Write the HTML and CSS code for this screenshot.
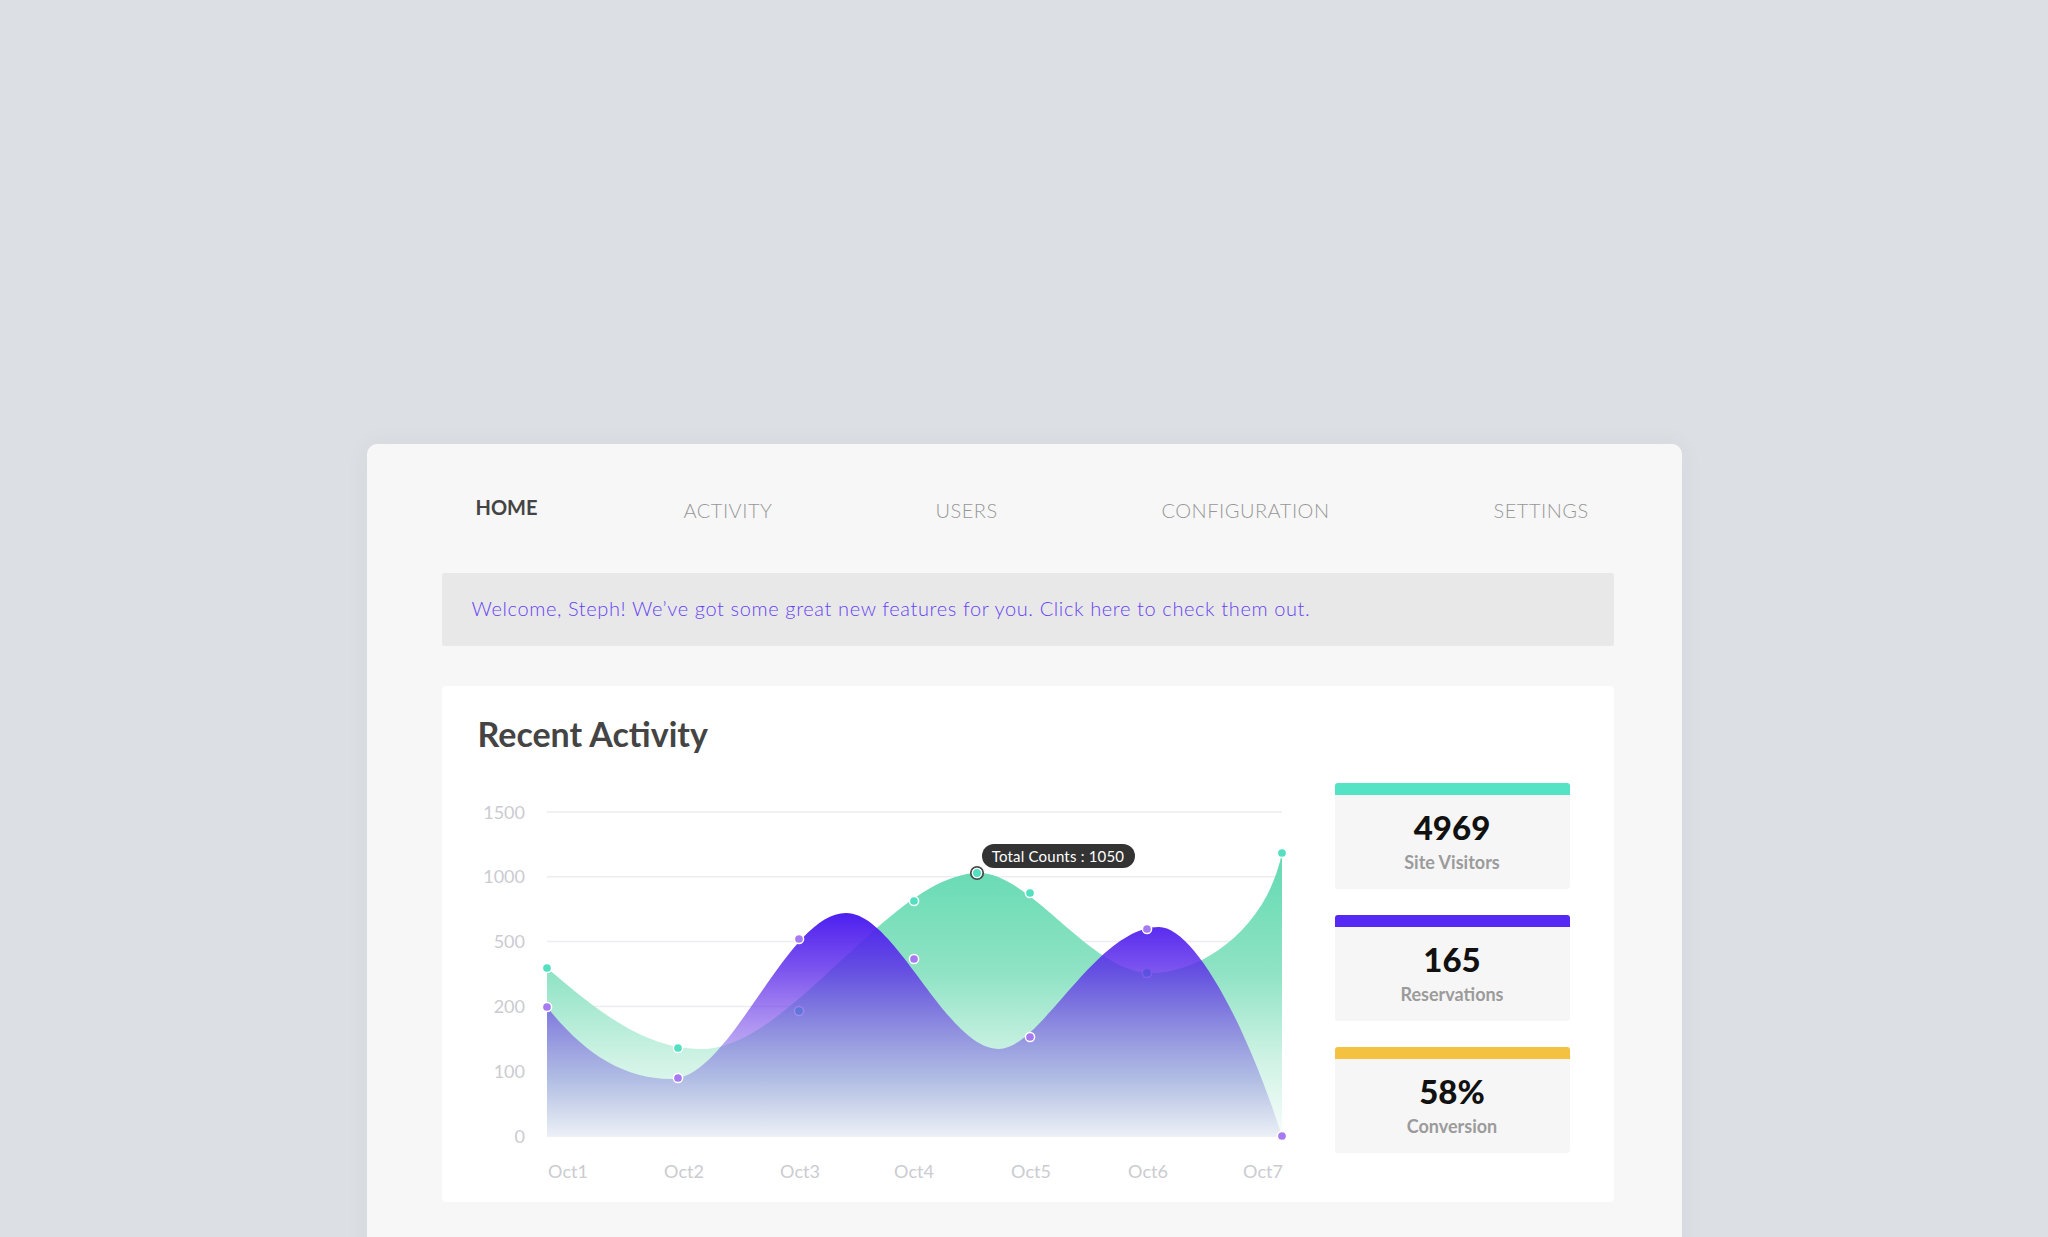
FILE: index.html
```html
<!DOCTYPE html>
<html lang="en">
<head>
<meta charset="utf-8">
<title>Dashboard</title>
<link rel="stylesheet" href="styles.css">
</head>
<body>
<div class="panel">
  <nav class="nav">
    <span class="nav-item active">HOME</span>
    <span class="nav-item">ACTIVITY</span>
    <span class="nav-item">USERS</span>
    <span class="nav-item">CONFIGURATION</span>
    <span class="nav-item">SETTINGS</span>
  </nav>
  <div class="banner">Welcome, Steph! We’ve got some great new features for you. Click here to check them out.</div>
  <section class="activity">
    <h2 class="title">Recent Activity</h2>
    <div class="row">
      <div class="chart">
        <svg class="chart-svg" width="823" height="407" viewBox="477 783 823 407" xmlns="http://www.w3.org/2000/svg">
          <defs>
            <linearGradient id="gGreen" gradientUnits="userSpaceOnUse" x1="0" y1="853" x2="0" y2="1136">
              <stop offset="0" stop-color="#62dab2"/>
              <stop offset="0.42" stop-color="#8fe3c4"/>
              <stop offset="0.72" stop-color="#cdf2e4"/>
              <stop offset="1" stop-color="#f8fdfb"/>
            </linearGradient>
            <linearGradient id="gPurple" gradientUnits="userSpaceOnUse" x1="0" y1="913" x2="0" y2="1136">
              <stop offset="0" stop-color="#4d1ff0" stop-opacity="1"/>
              <stop offset="0.25" stop-color="#5a28ea" stop-opacity="0.8"/>
              <stop offset="0.5" stop-color="#6a38e6" stop-opacity="0.55"/>
              <stop offset="0.75" stop-color="#6c5ad8" stop-opacity="0.36"/>
              <stop offset="1" stop-color="#7a70d0" stop-opacity="0.1"/>
            </linearGradient>
          </defs>
          <g class="grid">
            <line x1="546" y1="812" x2="1281" y2="812"/>
            <line x1="546" y1="876.8" x2="1281" y2="876.8"/>
            <line x1="546" y1="941.6" x2="1281" y2="941.6"/>
            <line x1="546" y1="1006.4" x2="1281" y2="1006.4"/>
            <line x1="546" y1="1071.2" x2="1281" y2="1071.2"/>
            <line x1="546" y1="1136" x2="1281" y2="1136"/>
          </g>
          <g class="ylab">
            <text x="524" y="818.5">1500</text>
            <text x="524" y="883.3">1000</text>
            <text x="524" y="948.1">500</text>
            <text x="524" y="1012.9">200</text>
            <text x="524" y="1077.7">100</text>
            <text x="524" y="1142.5">0</text>
          </g>
          <g class="xlab">
            <text x="567" y="1178">Oct1</text>
            <text x="683" y="1178">Oct2</text>
            <text x="799" y="1178">Oct3</text>
            <text x="913" y="1178">Oct4</text>
            <text x="1030" y="1178">Oct5</text>
            <text x="1147" y="1178">Oct6</text>
            <text x="1262" y="1178">Oct7</text>
          </g>
          <path fill="url(#gGreen)" d="M546,968 C590,1005 640,1049 700,1049 C790,1049 890,873 978,873 C1030,873 1090,973 1150,973 C1200,973 1265,930 1281,853 L1281,1136 L546,1136 Z"/>
          <g class="dot-green">
            <circle cx="546" cy="968" r="4.6"/>
            <circle cx="677" cy="1048" r="4.6"/>
            <circle cx="798" cy="1011" r="4.6"/>
            <circle cx="913" cy="901" r="4.6"/>
            <circle cx="1029" cy="893" r="4.6"/>
            <circle cx="1146" cy="973" r="4.6"/>
            <circle cx="1281" cy="853" r="4.6"/>
          </g>
          <path fill="url(#gPurple)" d="M546,1007 C580,1050 620,1079 670,1079 C730,1079 785,913 845,913 C895,913 945,1049 998,1049 C1040,1049 1095,927 1158,927 C1190,927 1240,1010 1281,1136 L546,1136 Z"/>
          <g class="dot-purple">
            <circle cx="546" cy="1007" r="4.6"/>
            <circle cx="677" cy="1078" r="4.6"/>
            <circle cx="798" cy="939" r="4.6"/>
            <circle cx="913" cy="959" r="4.6"/>
            <circle cx="1029" cy="1037" r="4.6"/>
            <circle cx="1146" cy="929" r="4.6"/>
            <circle cx="1281" cy="1136" r="4.6"/>
          </g>
          <circle class="hover-ring" cx="976" cy="873" r="6.2"/>
          <circle class="hover-dot" cx="976" cy="873" r="4.6"/>
        </svg>
        <div class="tooltip">Total Counts : 1050</div>
      </div>
      <div class="stats">
        <div class="stat">
          <div class="stat-bar teal"></div>
          <div class="stat-body">
            <div class="stat-num">4969</div>
            <div class="stat-label">Site Visitors</div>
          </div>
        </div>
        <div class="stat">
          <div class="stat-bar violet"></div>
          <div class="stat-body">
            <div class="stat-num">165</div>
            <div class="stat-label">Reservations</div>
          </div>
        </div>
        <div class="stat">
          <div class="stat-bar yellow"></div>
          <div class="stat-body">
            <div class="stat-num">58%</div>
            <div class="stat-label">Conversion</div>
          </div>
        </div>
      </div>
    </div>
  </section>
</div>
</body>
</html>
```

FILE: styles.css
```css
* { box-sizing: border-box; }

html, body {
  margin: 0;
  padding: 0;
}

body {
  background: #dcdfe3;
  height: 1237px;
  overflow: hidden;
  font-family: Lato, "Open Sans", "Liberation Sans", sans-serif;
}

.panel {
  width: 1315px;
  height: 900px;
  margin: 444px auto 0;
  background: #f7f7f7;
  border-radius: 10px;
  padding: 51px 68px 0 75px;
  box-shadow: 0 0 24px rgba(60, 70, 90, 0.05);
}

.nav {
  display: grid;
  grid-template-columns: 208px 252px 226px 332px auto;
  align-items: end;
  height: 27px;
  padding: 0 0 0 34px;
  margin-bottom: 51px;
}

.nav-item {
  font-size: 20px;
  line-height: 24px;
  font-weight: 300;
  color: #979797;
  letter-spacing: 0.5px;
}

.nav-item.active {
  color: #444;
  font-weight: 700;
  letter-spacing: 0;
  padding-bottom: 3px;
}

.banner {
  height: 73px;
  display: flex;
  align-items: center;
  padding: 0 30px 3px;
  background: #e8e8e8;
  border-radius: 3px;
  color: #6643f4;
  font-size: 20px;
  line-height: 24px;
  font-weight: 300;
  letter-spacing: 0.62px;
  margin-bottom: 40px;
}

.activity {
  background: #fff;
  border-radius: 4px;
  height: 516px;
  padding: 28px 44px 0 36px;
}

.title {
  margin: 0;
  font-size: 34px;
  line-height: 40px;
  font-weight: 700;
  color: #444;
}

.row {
  display: flex;
  justify-content: space-between;
  margin-top: 29px;
}

.chart {
  position: relative;
  width: 823px;
  height: 407px;
}

.chart-svg {
  display: block;
}

.grid line {
  stroke: #ececf1;
  stroke-width: 1.5;
}

.ylab text,
.xlab text {
  font-family: Lato, "Open Sans", sans-serif;
  font-size: 18px;
  fill: #cbcbd1;
}

.ylab text { text-anchor: end; }
.xlab text { text-anchor: middle; }

.dot-green circle {
  fill: #52e0c0;
  stroke: #fff;
  stroke-width: 1.5;
}

.dot-purple circle {
  fill: #a67bf1;
  stroke: #fff;
  stroke-width: 1.5;
}

.hover-ring {
  fill: none;
  stroke: #4a4a4a;
  stroke-width: 1.8;
}

.hover-dot {
  fill: #52e0c0;
  stroke: #fff;
  stroke-width: 1.2;
}

.tooltip {
  position: absolute;
  left: 504px;
  top: 61px;
  width: 153px;
  height: 24px;
  border-radius: 12px;
  background: #333;
  color: #fff;
  font-size: 15px;
  letter-spacing: 0.2px;
  line-height: 24px;
  text-align: center;
  white-space: nowrap;
}

.stats {
  width: 235px;
  display: flex;
  flex-direction: column;
  gap: 26px;
}

.stat {
  height: 106px;
  display: flex;
  flex-direction: column;
}

.stat-bar {
  height: 12px;
  border-radius: 3px 3px 0 0;
}

.stat-bar.teal { background: #54e3c4; }
.stat-bar.violet { background: #5628f4; }
.stat-bar.yellow { background: #f4c141; }

.stat-body {
  flex: 1;
  background: #f6f6f6;
  border-radius: 0 0 3px 3px;
  text-align: center;
  padding-top: 16px;
}

.stat-num {
  font-size: 33px;
  line-height: 32px;
  font-weight: 900;
  color: #111;
}

.stat-label {
  margin-top: 8px;
  font-size: 18px;
  line-height: 22px;
  font-weight: 700;
  color: #9b9b9b;
}
```
